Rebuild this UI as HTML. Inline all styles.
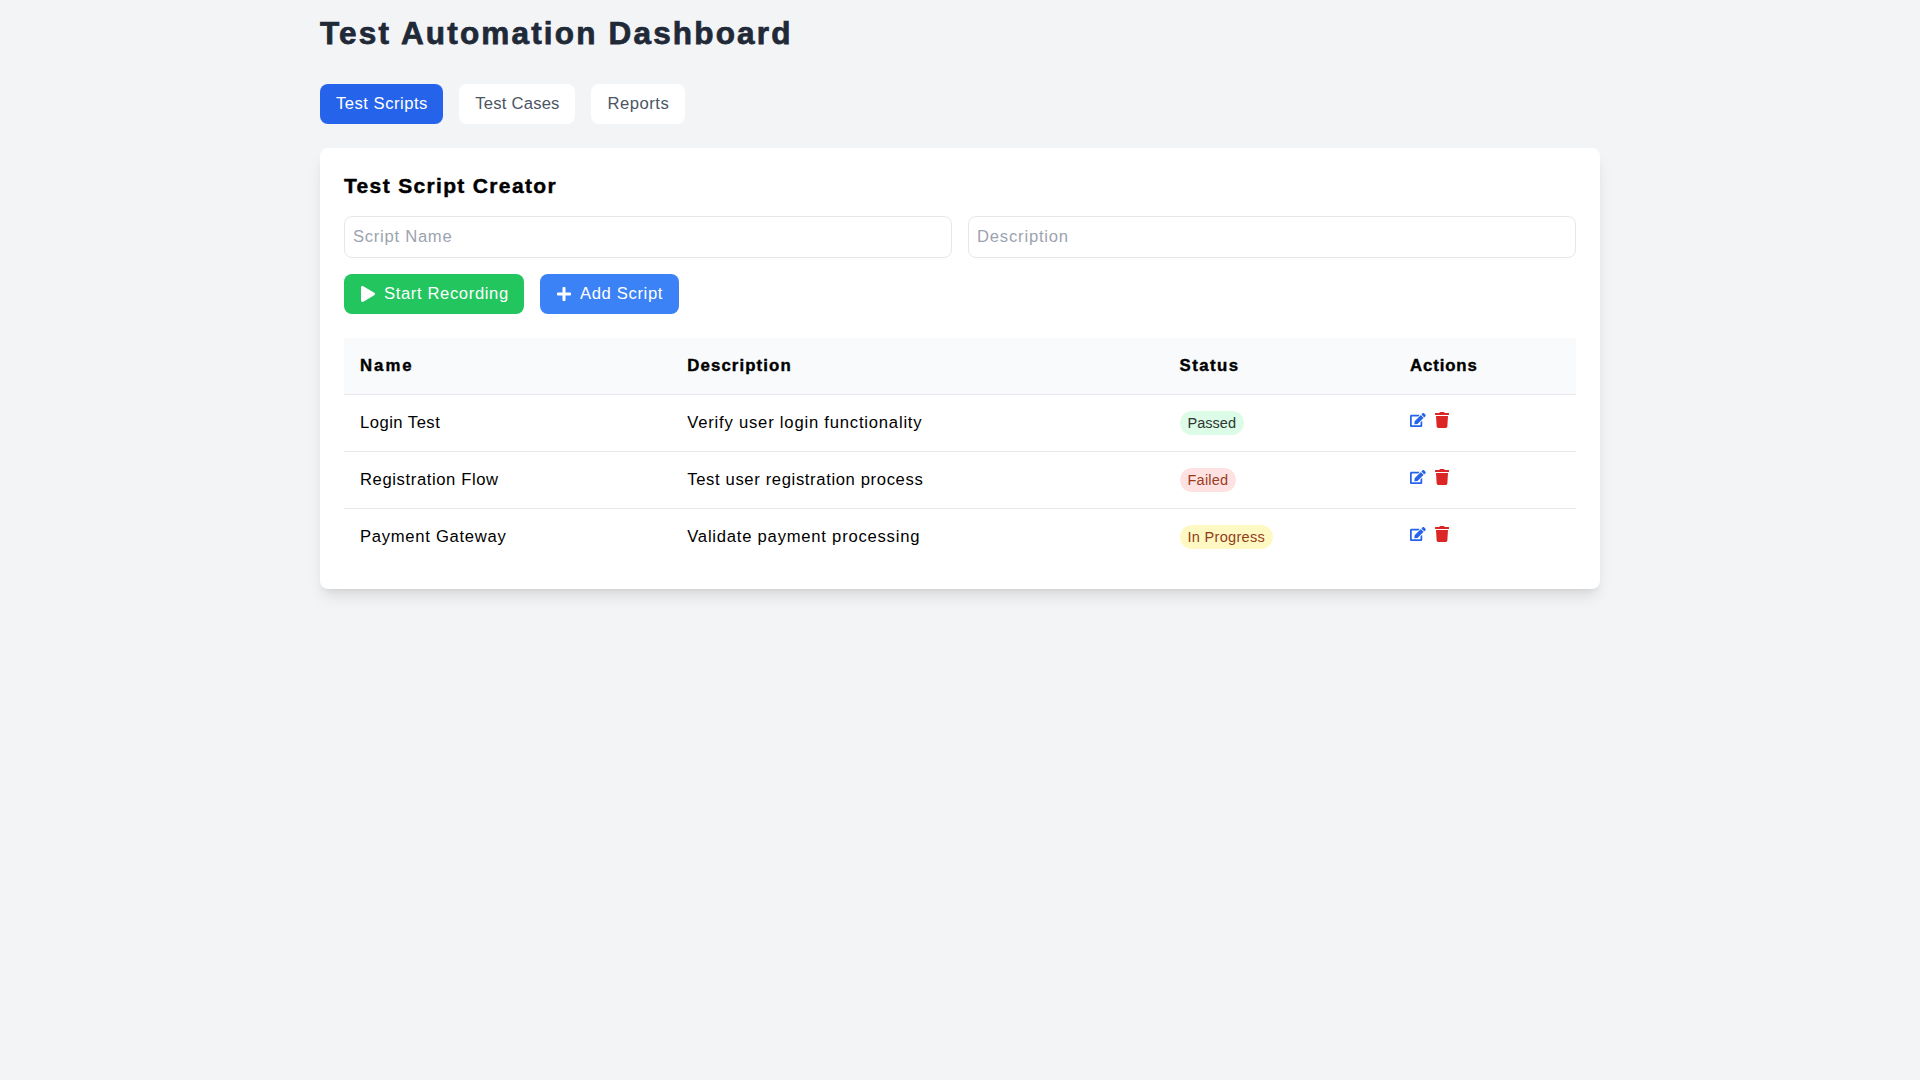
<!DOCTYPE html>
<html><head><meta charset="utf-8"><title>Test Automation Dashboard</title>
<style>
*{box-sizing:border-box;margin:0;padding:0;border:0 solid #e5e7eb}
html,body{background:#f3f4f6;font-family:"Liberation Sans",sans-serif;color:#000;width:1920px;height:1080px;overflow:hidden}
.wrap{width:1280px;margin:0 auto;padding-top:16px}
h1{position:relative;top:-1px;font-size:31.50px;line-height:36px;height:36px;font-weight:bold;color:#1f2937;margin-bottom:32px;white-space:nowrap;-webkit-text-stroke:0.75px #1f2937}
.tabs{display:flex;height:40px;margin-bottom:24px}
.tab{height:40px;padding:8px 0 0 16px;border-radius:8px;background:#fff;color:#4b5563;font-size:16.64px;line-height:24px;white-space:nowrap;margin-right:16px}
.tab.active{background:#2563eb;color:#fff}
.card{background:#fff;border-radius:8px;padding:24px;height:441px;box-shadow:0 10px 15px -3px rgba(0,0,0,.1),0 4px 6px -4px rgba(0,0,0,.1)}
h2{font-size:21.00px;line-height:28px;height:28px;font-weight:bold;margin-bottom:16px;white-space:nowrap;-webkit-text-stroke:0.45px #000}
.grid{display:flex;height:42px;margin-bottom:16px}
.inp{width:608px;height:42px;border:1px solid #e5e7eb;border-radius:8px;padding:8px;font-size:16.64px;line-height:24px;color:#9ca3af;white-space:nowrap}
.inp+.inp{margin-left:16px}
.btns{display:flex;height:40px;margin-bottom:24px}
.btn{position:relative;height:40px;border-radius:8px;color:#fff;font-size:16.64px;line-height:24px;padding:8px 0 0 40px;white-space:nowrap}
.btn svg{position:absolute;left:17px;top:12px}
.green{background:#22c55e;width:180px;margin-right:16px}.blue{background:#3b82f6;width:139px}
table{width:1232px;border-collapse:collapse;table-layout:fixed}
th{background:#f9fafb;text-align:left;font-weight:bold;padding:16px;font-size:16.80px;line-height:24px;white-space:nowrap;-webkit-text-stroke:0.4px #000}
td{padding:16px;font-size:16.64px;line-height:24px;white-space:nowrap}
thead tr{border-bottom:1px solid #e5e7eb}
tbody tr{border-bottom:1px solid #e5e7eb}
tbody tr:last-child{border-bottom:0}
.badge{display:inline-block;vertical-align:top;padding:2px 8px;border-radius:9999px;font-size:14.56px;line-height:20px;height:24px;white-space:nowrap}
.act{position:relative}
.act svg{position:absolute}
.ic-edit{left:16px;top:18px}
.ic-trash{left:41px;top:17px}
</style></head><body>
<div class="wrap">
<h1><span id="h1" style="letter-spacing:2.176px">Test Automation Dashboard</span></h1>
<div class="tabs"><div class="tab active" style="width:123.34px"><span id="tab1" style="letter-spacing:0.493px">Test Scripts</span></div><div class="tab" style="width:116.09px"><span id="tab2" style="letter-spacing:0.206px">Test Cases</span></div><div class="tab" style="width:93.38px"><span id="tab3" style="letter-spacing:0.527px">Reports</span></div></div>
<div class="card">
<h2><span id="h2" style="letter-spacing:1.337px">Test Script Creator</span></h2>
<div class="grid"><div class="inp"><span id="ph1" style="letter-spacing:0.723px">Script Name</span></div><div class="inp"><span id="ph2" style="letter-spacing:0.796px">Description</span></div></div>
<div class="btns"><div class="btn green"><svg class="ic-play" viewBox="0 0 448 512" width="14" height="16"><path fill="#fff" d="M424.4 214.7L72.4 6.6C43.8-10.3 0 6.1 0 47.9V464c0 37.5 40.7 60.1 72.4 41.3l352-208c31.4-18.5 31.5-64.1 0-82.6z"/></svg><span id="b1" style="letter-spacing:0.620px">Start Recording</span></div><div class="btn blue"><svg class="ic-plus" viewBox="0 0 448 512" width="14" height="16"><path fill="#fff" d="M416 208H272V64c0-17.67-14.33-32-32-32h-32c-17.67 0-32 14.33-32 32v144H32c-17.67 0-32 14.33-32 32v32c0 17.67 14.33 32 32 32h144v144c0 17.67 14.330 32 32 32h32c17.67 0 32-14.33 32-32V304h144c17.67 0 32-14.33 32-32v-32c0-17.67-14.33-32-32-32z"/></svg><span id="b2" style="letter-spacing:0.641px">Add Script</span></div></div>
<table><colgroup><col style="width:327.25px"><col style="width:492.27px"><col style="width:230.42px"><col style="width:182.06px"></colgroup>
<thead><tr><th><span id="th1" style="letter-spacing:2.000px">Name</span></th><th><span id="th2" style="letter-spacing:1.115px">Description</span></th><th><span id="th3" style="letter-spacing:1.447px">Status</span></th><th><span id="th4" style="letter-spacing:0.894px">Actions</span></th></tr></thead>
<tbody>
<tr><td><span id="r1n" style="letter-spacing:0.476px">Login Test</span></td><td><span id="r1d" style="letter-spacing:0.788px">Verify user login functionality</span></td><td><span class="badge" style="background:#dcfce7;color:#2f3532"><span id="r1s" style="letter-spacing:-0.010px">Passed</span></span></td><td class="act"><svg class="ic-edit" viewBox="0 0 576 512" width="15.75" height="14"><path fill="#2563eb" d="M402.6 83.2l90.2 90.2c3.8 3.8 3.8 10 0 13.8L274.4 405.6l-92.8 10.3c-12.4 1.4-22.9-9.1-21.5-21.5l10.3-92.8L388.8 83.2c3.8-3.8 10-3.8 13.8 0zm162-22.9l-48.8-48.8c-15.2-15.2-39.9-15.2-55.2 0l-35.4 35.4c-3.8 3.8-3.8 10 0 13.8l90.2 90.2c3.8 3.8 10 3.8 13.8 0l35.4-35.4c15.2-15.3 15.2-40 0-55.2zM384 346.2V448H64V128h229.8c3.2 0 6.2-1.3 8.5-3.5l40-40c7.6-7.6 2.2-20.5-8.5-20.5H48C21.5 64 0 85.5 0 112v352c0 26.5 21.5 48 48 48h352c26.5 0 48-21.5 48-48V306.2c0-10.7-12.9-16-20.5-8.5l-40 40c-2.2 2.3-3.5 5.3-3.5 8.5z"/></svg><svg class="ic-trash" viewBox="0 0 448 512" width="14" height="16"><path fill="#dc2626" d="M432 32H312l-9.4-18.7A24 24 0 0 0 281.1 0H166.8a23.72 23.72 0 0 0-21.4 13.3L136 32H16A16 16 0 0 0 0 48v32a16 16 0 0 0 16 16h416a16 16 0 0 0 16-16V48a16 16 0 0 0-16-16zM53.2 467a48 48 0 0 0 47.9 45h245.8a48 48 0 0 0 47.9-45L416 128H32z"/></svg></td></tr>
<tr><td><span id="r2n" style="letter-spacing:0.603px">Registration Flow</span></td><td><span id="r2d" style="letter-spacing:0.632px">Test user registration process</span></td><td><span class="badge" style="background:#fee2e2;color:#9a3b1c"><span id="r2s" style="letter-spacing:0.203px">Failed</span></span></td><td class="act"><svg class="ic-edit" viewBox="0 0 576 512" width="15.75" height="14"><path fill="#2563eb" d="M402.6 83.2l90.2 90.2c3.8 3.8 3.8 10 0 13.8L274.4 405.6l-92.8 10.3c-12.4 1.4-22.9-9.1-21.5-21.5l10.3-92.8L388.8 83.2c3.8-3.8 10-3.8 13.8 0zm162-22.9l-48.8-48.8c-15.2-15.2-39.9-15.2-55.2 0l-35.4 35.4c-3.8 3.8-3.8 10 0 13.8l90.2 90.2c3.8 3.8 10 3.8 13.8 0l35.4-35.4c15.2-15.3 15.2-40 0-55.2zM384 346.2V448H64V128h229.8c3.2 0 6.2-1.3 8.5-3.5l40-40c7.6-7.6 2.2-20.5-8.5-20.5H48C21.5 64 0 85.5 0 112v352c0 26.5 21.5 48 48 48h352c26.5 0 48-21.5 48-48V306.2c0-10.7-12.9-16-20.5-8.5l-40 40c-2.2 2.3-3.5 5.3-3.5 8.5z"/></svg><svg class="ic-trash" viewBox="0 0 448 512" width="14" height="16"><path fill="#dc2626" d="M432 32H312l-9.4-18.7A24 24 0 0 0 281.1 0H166.8a23.72 23.72 0 0 0-21.4 13.3L136 32H16A16 16 0 0 0 0 48v32a16 16 0 0 0 16 16h416a16 16 0 0 0 16-16V48a16 16 0 0 0-16-16zM53.2 467a48 48 0 0 0 47.9 45h245.8a48 48 0 0 0 47.9-45L416 128H32z"/></svg></td></tr>
<tr><td><span id="r3n" style="letter-spacing:0.712px">Payment Gateway</span></td><td><span id="r3d" style="letter-spacing:0.766px">Validate payment processing</span></td><td><span class="badge" style="background:#fef9c3;color:#923c18"><span id="r3s" style="letter-spacing:0.281px">In Progress</span></span></td><td class="act"><svg class="ic-edit" viewBox="0 0 576 512" width="15.75" height="14"><path fill="#2563eb" d="M402.6 83.2l90.2 90.2c3.8 3.8 3.8 10 0 13.8L274.4 405.6l-92.8 10.3c-12.4 1.4-22.9-9.1-21.5-21.5l10.3-92.8L388.8 83.2c3.8-3.8 10-3.8 13.8 0zm162-22.9l-48.8-48.8c-15.2-15.2-39.9-15.2-55.2 0l-35.4 35.4c-3.8 3.8-3.8 10 0 13.8l90.2 90.2c3.8 3.8 10 3.8 13.8 0l35.4-35.4c15.2-15.3 15.2-40 0-55.2zM384 346.2V448H64V128h229.8c3.2 0 6.2-1.3 8.5-3.5l40-40c7.6-7.6 2.2-20.5-8.5-20.5H48C21.5 64 0 85.5 0 112v352c0 26.5 21.5 48 48 48h352c26.5 0 48-21.5 48-48V306.2c0-10.7-12.9-16-20.5-8.5l-40 40c-2.2 2.3-3.5 5.3-3.5 8.5z"/></svg><svg class="ic-trash" viewBox="0 0 448 512" width="14" height="16"><path fill="#dc2626" d="M432 32H312l-9.4-18.7A24 24 0 0 0 281.1 0H166.8a23.72 23.72 0 0 0-21.4 13.3L136 32H16A16 16 0 0 0 0 48v32a16 16 0 0 0 16 16h416a16 16 0 0 0 16-16V48a16 16 0 0 0-16-16zM53.2 467a48 48 0 0 0 47.9 45h245.8a48 48 0 0 0 47.9-45L416 128H32z"/></svg></td></tr>
</tbody></table>
</div></div>
</body></html>
